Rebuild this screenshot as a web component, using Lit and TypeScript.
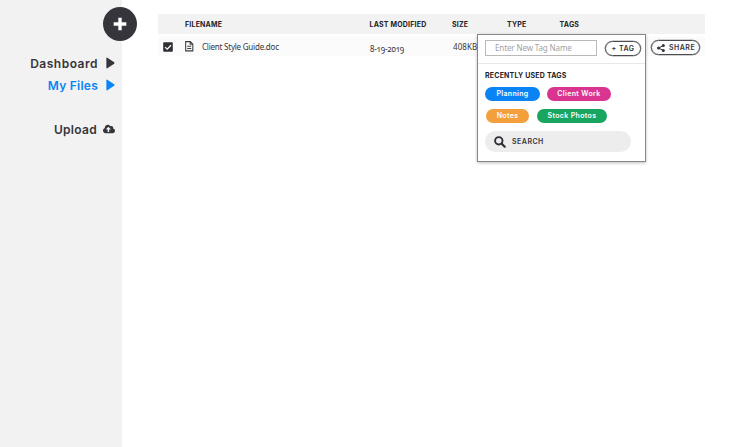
import { LitElement, html, css, svg } from "lit";
import { customElement, property } from "lit/decorators.js";
import { classMap } from "lit/directives/class-map.js";

const shapes: Record<string, [string, unknown]> = {
  plus: ["0 0 14 14", svg`<path d="M7 .7V13.300M.7 7H13.300" fill="none" stroke="currentColor" stroke-width="3.400"/>`],
  play: ["0 0 9 12", svg`<path d="M0.4 1.2Q0.4 .2 1.3 .7L8.2 5.3Q8.9 6 8.2 6.7L1.3 11.3Q.4 11.8 .4 10.8Z" fill="currentColor"/>`],
  cloud: ["0 0 640 512", svg`<path fill="currentColor" d="M537.600 226.600c4.100-10.700 6.400-22.400 6.400-34.600 0-53-43-96-96-96-19.700 0-38.100 6-53.300 16.200C367 64.200 315.300 32 256 32c-88.400 0-160 71.600-160 160 0 2.700.1 5.400.2 8.100C40.200 219.800 0 273.200 0 336c0 79.500 64.500 144 144 144h368c70.700 0 128-57.300 128-128 0-61.900-44-113.600-102.400-125.400zM393.400 288H328v112c0 8.800-7.200 16-16 16h-48c-8.800 0-16-7.200-16-16V288h-65.400c-14.300 0-21.400-17.200-11.300-27.300l105.400-105.400c6.200-6.200 16.400-6.200 22.600 0l105.400 105.400c10.100 10.100 2.900 27.300-11.300 27.300z"/>`],
  check: ["0 0 10 10", svg`<rect x=".2" y=".2" width="9.600" height="9.600" rx=".8" fill="#2f2f36"/><path d="M2.100 5.100L4.200 7.100L8 3.200" fill="none" stroke="#fff" stroke-width="1.300"/>`],
  file: ["0 0 8 10", svg`<path d="M.6 .6H5L7.400 3V9.400H.6ZM4.900 .6V3.100H7.400M2.100 5H5.900M2.100 7.100H5.900" fill="none" stroke="#3b3b40" stroke-width="1"/>`],
  share: ["0 0 8 8", svg`<path d="M6.400 1.500L1.600 4L6.400 6.500" fill="none" stroke="currentColor" stroke-width="1"/><circle cx="6.300" cy="1.600" r="1.500" fill="currentColor"/><circle cx="1.600" cy="4" r="1.600" fill="currentColor"/><circle cx="6.300" cy="6.400" r="1.500" fill="currentColor"/>`],
  search: ["0 0 12 12", svg`<circle cx="4.800" cy="4.800" r="3.700" fill="none" stroke="currentColor" stroke-width="1.900"/><path d="M7.700 7.700L10.700 10.700" stroke="currentColor" stroke-width="2.200" stroke-linecap="round"/>`],
};

@customElement("ui-icon")
class UiIcon extends LitElement {
  @property() name = "plus";
  static styles = css`
    :host { display: block; flex: none; }
    svg { display: block; width: 100%; height: 100%; }
  `;
  render() {
    const [box, body] = shapes[this.name];
    return html`<svg viewBox=${box}>${body}</svg>`;
  }
}

@customElement("tag-panel")
class TagPanel extends LitElement {
  static styles = css`
    :host {
      display: block; box-sizing: border-box; width: 169px; height: 128px;
      background: #fff; border: 1px solid #87878a;
      box-shadow: 0 1px 3px rgba(0, 0, 0, .25);
      font-family: Inter, sans-serif; color: #35353b;
    }
    .new { display: flex; align-items: flex-start; box-sizing: border-box; height: 29px; padding: 5px 0 0 7px; border-bottom: 1px solid #e8e8e8; }
    .field {
      box-sizing: border-box; width: 112px; height: 16px; border: 1px solid #b9b9b9;
      padding-left: 9px; font: 8px/14px "Noto Sans", sans-serif; letter-spacing: -.12px;
      color: #a2a2a2; white-space: nowrap;
    }
    .add {
      box-sizing: border-box; width: 36px; height: 15px; margin: 1px 0 0 8px;
      border: 1px solid #4b4b50; border-radius: 8px; text-align: center;
      font-size: 7px; line-height: 13px; font-weight: 600; letter-spacing: .5px; white-space: nowrap;
      box-shadow: 0 0 0 .3px #4b4b50;
    }
    .title { margin: 7px 0 0 7px; font-size: 7px; line-height: 9px; font-weight: 700; letter-spacing: .2px; color: #222226; white-space: nowrap; }
    .tags { display: flex; padding-left: 7px; margin-top: 7px; gap: 7px; }
    .tags + .tags { padding-left: 8px; gap: 8px; margin-top: 8px; }
    .tag {
      height: 14px; border-radius: 7px; text-align: center; color: #fff; white-space: nowrap;
      font-size: 7px; line-height: 14px; font-weight: 600; letter-spacing: .35px;
    }
    .planning { width: 55px; background: #0a84f5; }
    .client { width: 64px; background: #d9348f; }
    .notes { width: 43px; background: #f39f3b; }
    .stock { width: 70px; background: #18a55f; }
    .search {
      display: flex; align-items: center; box-sizing: border-box; width: 146px; height: 21px;
      margin: 8px 0 0 7px; padding-left: 9px; gap: 6px; border-radius: 11px; background: #ededed;
      font-size: 7px; font-weight: 600; letter-spacing: .5px;
    }
    .search ui-icon { width: 12px; height: 12px; color: #2f2f36; }
  `;
  render() {
    return html`
      <div class="new"><div class="field">Enter New Tag Name</div><div class="add">+ TAG</div></div>
      <div class="title">RECENTLY USED TAGS</div>
      <div class="tags"><div class="tag planning">Planning</div><div class="tag client">Client Work</div></div>
      <div class="tags"><div class="tag notes">Notes</div><div class="tag stock">Stock Photos</div></div>
      <div class="search"><ui-icon name="search"></ui-icon><span>SEARCH</span></div>
    `;
  }
}

@customElement("app-root")
class AppRoot extends LitElement {
  static styles = css`
    :host { display: flex; height: 447px; background: #fff; overflow: hidden; font-family: Inter, sans-serif; color: #35353b; }
    .side { position: relative; flex: none; box-sizing: border-box; width: 122px; background: #f2f2f2; padding: 52px 7px 0 0; }
    .create {
      position: absolute; left: 103px; top: 7px; width: 34px; height: 34px; border-radius: 50%;
      background: #35353b; color: #fff; display: flex; align-items: center; justify-content: center;
    }
    .create ui-icon { width: 14px; height: 14px; }
    .link {
      display: flex; align-items: center; justify-content: flex-end; height: 22px; gap: 8px;
      font-size: 12px; font-weight: 600; letter-spacing: .5px; white-space: nowrap;
    }
    .link ui-icon { width: 9px; height: 12px; }
    .active { color: #0a84f5; letter-spacing: .25px; }
    .upload { margin-top: 22px; gap: 6px; letter-spacing: .3px; }
    .upload ui-icon { width: 12px; height: 10px; }
    .main { position: relative; flex: 1; padding: 14px 38px 0 36px; }
    .row { display: grid; grid-template-columns: 27px 184.500px 82.500px 55px 52.500px 1fr; align-items: center; }
    .head { height: 20px; background: #f2f2f2; font-size: 7px; font-weight: 700; letter-spacing: .2px; color: #222226; white-space: nowrap; }
    .file { height: 19px; margin-top: 3px; background: #fbfbfb; font: 8px "Noto Sans", sans-serif; white-space: nowrap; }
    .check { width: 10px; height: 10px; margin-left: 5px; }
    .name { display: flex; align-items: center; gap: 8.500px; letter-spacing: -.22px; }
    .name ui-icon { width: 8.500px; height: 10.500px; }
    .date { position: relative; top: 2px; padding-left: .5px; font-size: 8px; letter-spacing: -.2px; font-variant-numeric: oldstyle-nums; }
    .size { padding-left: 1px; letter-spacing: .1px; }
    .share {
      grid-column: 6; justify-self: end; margin: 2px 5px 0 0; box-sizing: border-box; width: 49px; height: 15px;
      border: 1px solid #4b4b50; border-radius: 8px; display: flex; align-items: center; padding-left: 5px; gap: 4px;
      font: 600 7px Inter, sans-serif; letter-spacing: .5px;
      box-shadow: 0 0 0 .3px #4b4b50;
    }
    .share ui-icon { width: 8px; height: 8px; }
    tag-panel { position: absolute; left: 355px; top: 34px; }
  `;
  render() {
    const links = [
      { label: "Dashboard", icon: "play" },
      { label: "My Files", icon: "play", active: true },
      { label: "Upload", icon: "cloud", upload: true },
    ];
    return html`
      <nav class="side">
        <div class="create"><ui-icon name="plus"></ui-icon></div>
        ${links.map((l) => html`
          <div class=${classMap({ link: true, active: !!l.active, upload: !!l.upload })}>
            <span class="label">${l.label}</span><ui-icon name=${l.icon}></ui-icon>
          </div>`)}
      </nav>
      <main class="main">
        <div class="row head">
          <span></span><span>FILENAME</span><span>LAST MODIFIED</span><span>SIZE</span><span>TYPE</span><span>TAGS</span>
        </div>
        <div class="row file">
          <ui-icon class="check" name="check"></ui-icon>
          <div class="name"><ui-icon name="file"></ui-icon><span>Client Style Guide.doc</span></div>
          <span class="date">8-19-2019</span>
          <span class="size">408KB</span>
          <div class="share"><ui-icon name="share"></ui-icon><span>SHARE</span></div>
        </div>
        <tag-panel></tag-panel>
      </main>
    `;
  }
}
